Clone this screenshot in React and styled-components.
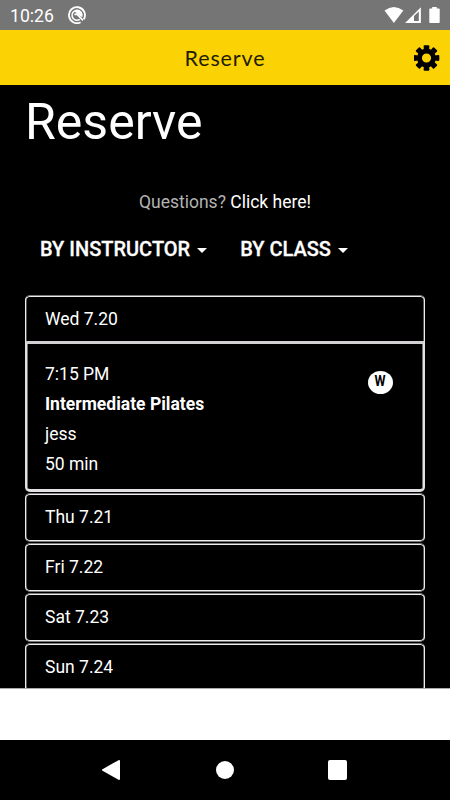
import React from 'react'
import styled, { createGlobalStyle } from 'styled-components';

const days = ['Thu 7.21', 'Fri 7.22', 'Sat 7.23', 'Sun 7.24'];
const teeth = [0, 45, 90, 135, 180, 225, 270, 315];

function GearIcon() {
    return (
        <svg width="26" height="26" viewBox="-12.5 -13 26 26">
            <circle r="7" fill="none" stroke="#000" strokeWidth="4.8" />
            {teeth.map((angle) => (
                <path
                    key={angle}
                    d="M-2.6 -8 L-2.9 -12 Q-2.8 -12.8 -2 -12.8 H2 Q2.8 -12.8 2.9 -12 L2.6 -8 Z"
                    transform={`rotate(${angle})`}
                />
            ))}
        </svg>
    )
}

function StatusIcons() {
    return (
        <svg width="56" height="18" viewBox="0 0 56 18">
            <path d="M0.5 4.6 Q9.9 -2.5 19.3 4.6 L9.9 17 Z" fill="#fff" />
            <path d="M36.9 1.2 V17 H21.1 Z" fill="#fff" />
            <path d="M30 10 L34.8 5.4 V15 H30 Z" fill="#757575" />
            <path d="M48.2 1 h4.6 v1.5 h2.1 q0.8 0 0.8 0.8 v13 q0 0.8 -0.8 0.8 h-8.8 q-0.8 0 -0.8 -0.8 V3.3 q0 -0.8 0.8 -0.8 h2.1 Z" fill="#fff" />
        </svg>
    )
}

function NoticeIcon() {
    return (
        <svg width="18" height="18" viewBox="0 0 18 18" fill="none">
            <path d="M12.6 16.2 A8 8 0 1 1 15.8 13.2" stroke="#fff" strokeWidth="1.8" />
            <path d="M11.8 13.4 A5 5 0 1 1 13.8 10.6" stroke="#fff" strokeWidth="1.6" />
            <path d="M6.4 8.4 L9 8.2 L15 14.4" stroke="#fff" strokeWidth="1.7" />
            <path d="M6.2 5.2 A4.6 4.6 0 0 1 13.2 11 Z" fill="#fff" />
        </svg>
    )
}

function App() {
    return (
        <Screen>
            <GlobalStyle />
            <StatusBar>
                <Clock>10:26</Clock>
                <NoticeIcon />
                <StatusRight>
                    <StatusIcons />
                </StatusRight>
            </StatusBar>
            <Header>
                <HeaderTitle>Reserve</HeaderTitle>
                <SettingsButton aria-label="Settings">
                    <GearIcon />
                </SettingsButton>
            </Header>
            <Content>
                <PageTitle>Reserve</PageTitle>
                <Questions>
                    Questions? <a>Click here!</a>
                </Questions>
                <Filters>
                    <Filter>BY INSTRUCTOR <Caret /></Filter>
                    <Filter>BY CLASS <Caret /></Filter>
                </Filters>
                <Schedule>
                    <DayRow $open>Wed 7.20</DayRow>
                    <ClassCard>
                        <div>
                            <p>7:15 PM</p>
                            <p><strong>Intermediate Pilates</strong></p>
                            <p>jess</p>
                            <p>50 min</p>
                        </div>
                        <Badge><span>W</span></Badge>
                    </ClassCard>
                    {days.map((day) => (
                        <DayRow key={day}>{day}</DayRow>
                    ))}
                </Schedule>
            </Content>
            <TabBar />
            <NavBar>
                <svg width="18" height="20" viewBox="0 0 18 20">
                    <path d="M1 10 L17 1 V19 Z" fill="#fff" stroke="#fff" strokeWidth="2" strokeLinejoin="round" />
                </svg>
                <HomeButton />
                <RecentButton />
            </NavBar>
        </Screen>
    )
}

export default App

const GlobalStyle = createGlobalStyle`
    * {
        box-sizing: border-box;
    }
    body {
        margin: 0;
        background: #000;
    }
    p, h1 {
        margin: 0;
    }
`;
const Screen = styled.div`
    display: flex;
    flex-direction: column;
    width: 450px;
    height: 800px;
    overflow: hidden;
    background: #000;
    color: #fff;
    font-family: Roboto, "Liberation Sans", sans-serif;
`;
const StatusBar = styled.div`
    display: flex;
    align-items: center;
    flex: 0 0 30px;
    padding: 0 10px;
    background: #757575;
`;
const Clock = styled.div`
    width: 58px;
    padding-top: 2px;
    font-size: 17.6px;
    line-height: 28px;
`;
const StatusRight = styled.div`
    display: flex;
    margin-left: auto;
`;
const Header = styled.div`
    display: grid;
    grid-template-columns: 1fr auto 1fr;
    align-items: center;
    flex: 0 0 55px;
    padding: 0 10px;
    background: #fbd304;
    color: #221d00;
`;
const HeaderTitle = styled.div`
    grid-column: 2;
    font-family: Lato, sans-serif;
    font-size: 21.5px;
    font-weight: 400;
    line-height: 28px;
    letter-spacing: 0.9px;
`;
const SettingsButton = styled.button`
    display: flex;
    justify-self: end;
    padding: 0;
    border: 0;
    background: none;
`;
const Content = styled.div`
    flex: 0 0 603px;
    padding: 0 25px;
    overflow: hidden;
`;
const PageTitle = styled.h1`
    padding-top: 7px;
    font-size: 50px;
    font-weight: 400;
    line-height: 60px;
`;
const Questions = styled.p`
    margin-top: 38px;
    color: #b3b3b3;
    font-size: 17.5px;
    line-height: 24px;
    text-align: center;
    > a {
        color: #fff;
    }
`;
const Filters = styled.div`
    display: flex;
    gap: 32px;
    margin-top: 20px;
    padding-left: 15px;
`;
const Filter = styled.div`
    display: flex;
    align-items: center;
    font-size: 20px;
    font-weight: 500;
    line-height: 30px;
    -webkit-text-stroke: 0.3px #fff;
`;
const Caret = styled.span`
    width: 0;
    margin: 2px 0 0 7px;
    border: 5px solid transparent;
    border-width: 5px 5.5px 0;
    border-top-color: #fff;
    margin-right: 1px;
`;
const Schedule = styled.div`
    margin-top: 31px;
`;
const DayRow = styled.div`
    height: ${(props) => props.$open ? '46px' : '49px'};
    margin-bottom: ${(props) => props.$open ? '0' : '1px'};
    padding-left: 19px;
    border: 1px solid;
    border-color: #777 #eee;
    border-bottom-width: ${(props) => props.$open ? '0' : '1px'};
    border-radius: ${(props) => props.$open ? '5px 5px 0 0' : '5px'};
    box-shadow: inset 0 1px #eee, inset 0 ${(props) => props.$open ? '0' : '-1px'} #eee, inset 1px 0 #555, inset -1px 0 #555;
    font-size: 17.5px;
    line-height: 46px;
`;
const ClassCard = styled.div`
    display: flex;
    justify-content: space-between;
    height: 151px;
    margin-bottom: 1px;
    padding: 15px 30px 0 18px;
    border: solid #e3e1e3;
    border-width: 3px 2px;
    border-top-color: #d2d0d2;
    border-radius: 0 0 5px 5px;
    box-shadow: inset 1px 0 #777, inset -1px 0 #777;
    font-size: 17.5px;
    line-height: 30px;
`;
const Badge = styled.div`
    width: 25px;
    height: 23px;
    margin-top: 12px;
    border-radius: 50%;
    background: #fff;
    color: #000;
    font-size: 14px;
    font-weight: 700;
    line-height: 21px;
    text-align: center;
    > span {
        display: inline-block;
        transform: scaleX(0.9);
    }
`;
const TabBar = styled.div`
    flex: 0 0 52px;
    border-top: 1px solid #aaa;
    background: #fff;
`;
const NavBar = styled.div`
    display: flex;
    align-items: center;
    justify-content: space-between;
    flex: 0 0 60px;
    padding: 0 103px 0 102px;
    background: #000;
`;
const HomeButton = styled.div`
    width: 18px;
    height: 18px;
    margin-left: 2px;
    border-radius: 50%;
    background: #fff;
`;
const RecentButton = styled.div`
    width: 19px;
    height: 20px;
    border-radius: 2px;
    background: #fff;
`;
